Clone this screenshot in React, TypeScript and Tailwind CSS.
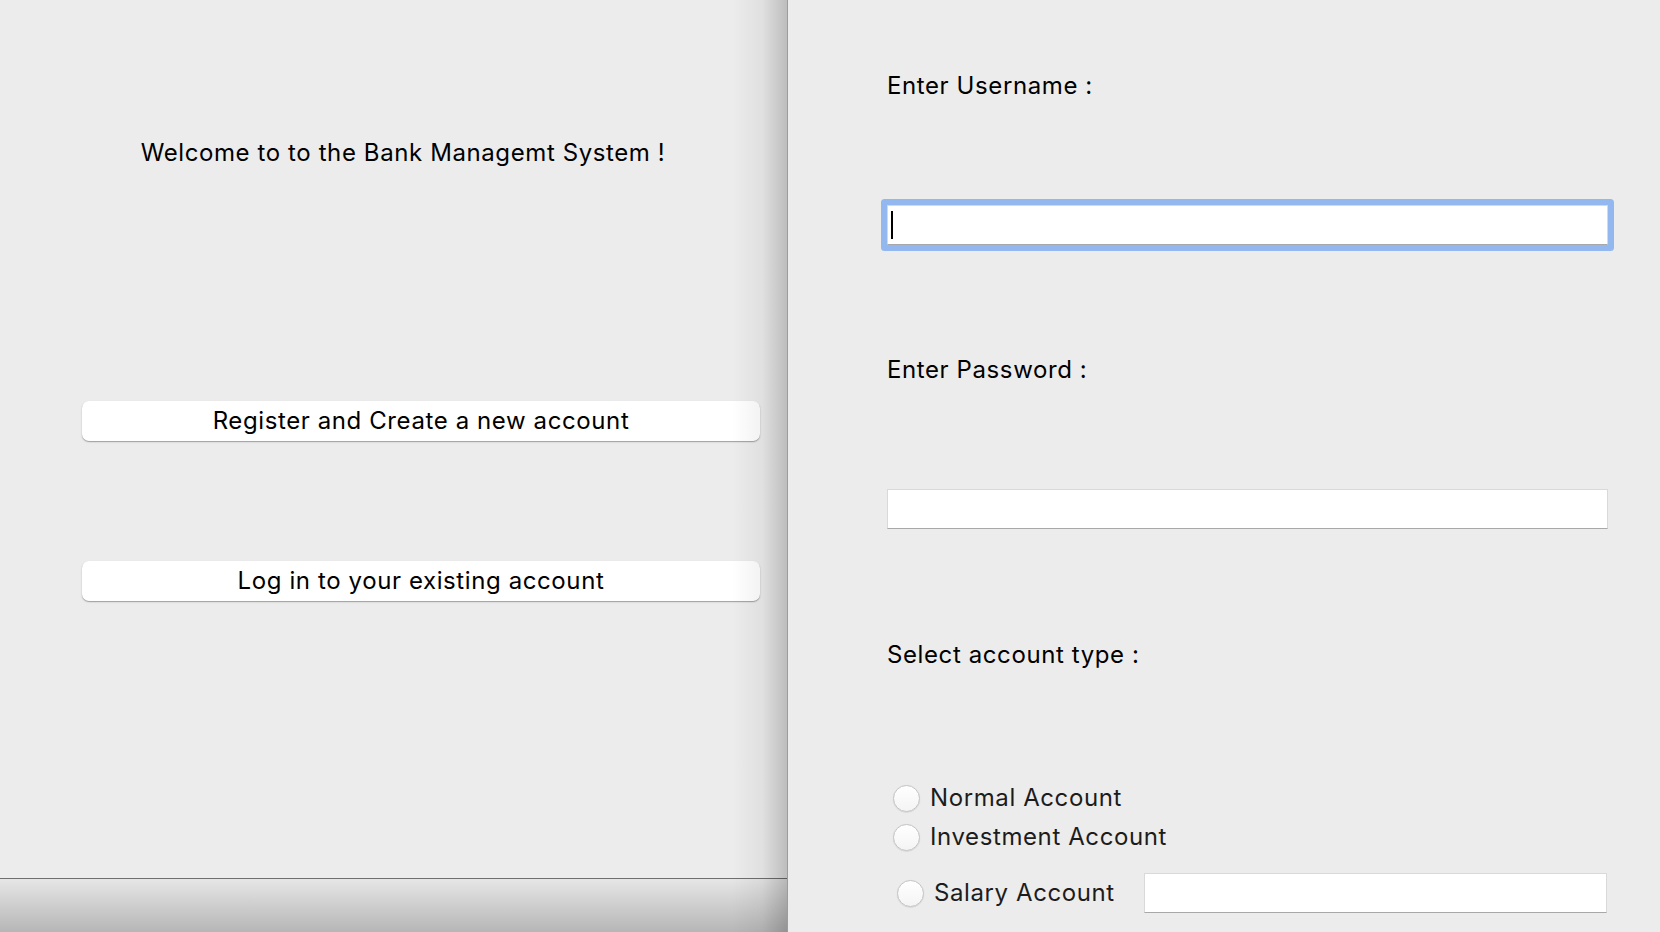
import React from "react";

// ── Small pieces ──────────────────────────────────────────────────────────────

const FONT = "font-['Inter','Liberation_Sans',sans-serif] tracking-[0.6px]";

function MacButton({ label }: { label: string }) {
  return (
    <button
      type="button"
      className="ml-[82px] h-[40px] w-[678px] rounded-[7px] bg-white text-[24px] leading-[30px] tracking-[0.6px] text-black shadow-[0_0.5px_0_0_rgba(0,0,0,0.12),0_1px_1.5px_rgba(0,0,0,0.3)]"
    >
      {label}
    </button>
  );
}

function TextBox({ width, caret = false }: { width: string; caret?: boolean }) {
  return (
    <div
      className={`flex h-[40px] items-center border border-[#d9d9d9] border-b-[#a8a8a8] bg-white pl-[3px] ${width} ${
        caret ? "ring-[6px] ring-[#93b8ef] rounded-[1px]" : ""
      }`}
    >
      {caret && <span className="block h-[28px] w-[2px] bg-black" />}
    </div>
  );
}

function Radio({ label, className = "" }: { label: string; className?: string }) {
  return (
    <label className={`flex items-center gap-[10px] ${className}`}>
      <span className="block h-[27px] w-[27px] rounded-full border border-[#c4c4c4] bg-[linear-gradient(#ffffff,#f4f4f4)] shadow-[0_0.5px_1px_rgba(0,0,0,0.15)]" />
      <span className="text-[24px] leading-[30px] text-[#1c1c1c]">{label}</span>
    </label>
  );
}

// ── Main ──────────────────────────────────────────────────────────────────────

export default function App() {
  return (
    <div className={`flex h-[932px] w-[1660px] overflow-hidden bg-[#ececec] ${FONT}`}>
      {/* Left: welcome window */}
      <div className="relative flex w-[788px] shrink-0 flex-col">
        <p className="mt-[138px] pl-[18px] text-center text-[24px] leading-[30px] text-black">
          Welcome to to the Bank Managemt System !
        </p>
        <div className="mt-[233px]">
          <MacButton label="Register and Create a new account" />
        </div>
        <div className="mt-[120px]">
          <MacButton label="Log in to your existing account" />
        </div>
        <div className="mt-auto h-[54px] border-t border-[#6f6f6f] bg-[linear-gradient(#e6e6e6,#b6b6b6)]" />
        {/* window shadow cast on the right edge */}
        <div className="pointer-events-none absolute inset-y-0 right-0 w-[56px] border-r border-[#9c9c9c] bg-[linear-gradient(to_right,rgba(0,0,0,0),rgba(0,0,0,0.05)_55%,rgba(0,0,0,0.2))]" />
      </div>

      {/* Right: register form */}
      <div className="flex flex-1 flex-col pl-[99px] text-[24px] leading-[30px] text-black">
        <p className="mt-[71px]">Enter Username :</p>
        <div className="mt-[104px]">
          <TextBox width="w-[721px]" caret />
        </div>

        <p className="mt-[110px]">Enter Password :</p>
        <div className="mt-[104px]">
          <TextBox width="w-[721px]" />
        </div>

        <p className="mt-[111px]">Select account type :</p>

        <div className="mt-[110px] flex flex-col">
          <Radio label="Normal Account" className="h-[36px] pl-[6px]" />
          <Radio label="Investment Account" className="mt-[3px] h-[36px] pl-[6px]" />
          <div className="mt-[18px] flex h-[40px] items-center">
            <Radio label="Salary Account" className="w-[257px] pl-[10px]" />
            <TextBox width="w-[463px]" />
          </div>
        </div>
      </div>
    </div>
  );
}
